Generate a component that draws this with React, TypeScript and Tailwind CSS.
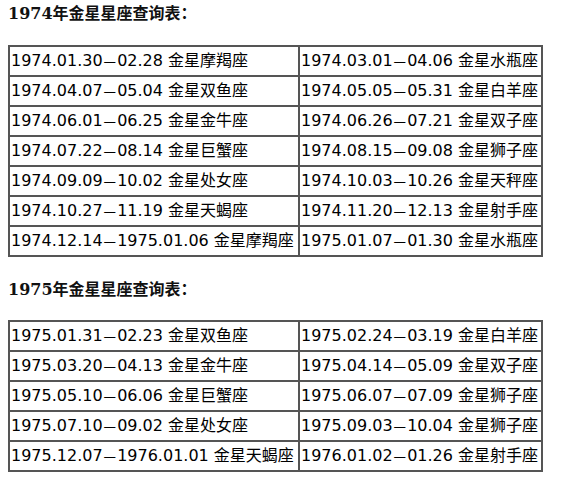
const table1974: [string, string][] = [
  ["1974.01.30—02.28 金星摩羯座", "1974.03.01—04.06 金星水瓶座"],
  ["1974.04.07—05.04 金星双鱼座", "1974.05.05—05.31 金星白羊座"],
  ["1974.06.01—06.25 金星金牛座", "1974.06.26—07.21 金星双子座"],
  ["1974.07.22—08.14 金星巨蟹座", "1974.08.15—09.08 金星狮子座"],
  ["1974.09.09—10.02 金星处女座", "1974.10.03—10.26 金星天秤座"],
  ["1974.10.27—11.19 金星天蝎座", "1974.11.20—12.13 金星射手座"],
  ["1974.12.14—1975.01.06 金星摩羯座", "1975.01.07—01.30 金星水瓶座"],
];

const table1975: [string, string][] = [
  ["1975.01.31—02.23 金星双鱼座", "1975.02.24—03.19 金星白羊座"],
  ["1975.03.20—04.13 金星金牛座", "1975.04.14—05.09 金星双子座"],
  ["1975.05.10—06.06 金星巨蟹座", "1975.06.07—07.09 金星狮子座"],
  ["1975.07.10—09.02 金星处女座", "1975.09.03—10.04 金星狮子座"],
  ["1975.12.07—1976.01.01 金星天蝎座", "1976.01.02—01.26 金星射手座"],
];

function Heading({ year }: { year: string }) {
  return (
    <div className="h-[24px] leading-[24px] text-[16px] font-bold text-[#111] whitespace-nowrap font-['DejaVu_Serif','Noto_Sans_CJK_SC',serif]">
      {year}
      <span className="font-['Noto_Sans_CJK_SC',sans-serif]">年金星星座查询表：</span>
    </div>
  );
}

// the dash sits a little apart from the digits in the reference
function Period({ text }: { text: string }) {
  const [from, to] = text.split("—");
  return (
    <>
      {from}
      <span className="mx-[1px] text-[14px] leading-none font-['Noto_Sans_CJK_SC',sans-serif]">—</span>
      {to}
    </>
  );
}

function VenusTable({ rows }: { rows: [string, string][] }) {
  return (
    <table className="w-[535px] table-fixed border-separate border-spacing-0 border border-[#555]">
      <tbody>
        {rows.map(([left, right]) => (
          <tr key={left}>
            <td className="w-[290px] h-[30px] border border-[#555] pl-[1px] pr-0 py-0 leading-[28px] whitespace-nowrap overflow-visible">
              <Period text={left} />
            </td>
            <td className="w-[243px] h-[30px] border border-[#555] pl-[1px] pr-0 py-0 leading-[28px] whitespace-nowrap overflow-visible">
              <Period text={right} />
            </td>
          </tr>
        ))}
      </tbody>
    </table>
  );
}

export default function App() {
  return (
    <div className="min-h-screen bg-white px-[8px] text-[16px] text-black font-['DejaVu_Sans','Noto_Sans_CJK_SC',sans-serif]">
      <Heading year="1974" />
      <div className="mt-[21px]">
        <VenusTable rows={table1974} />
      </div>
      <div className="mt-[19px]">
        <Heading year="1975" />
      </div>
      <div className="mt-[20px]">
        <VenusTable rows={table1975} />
      </div>
    </div>
  );
}
